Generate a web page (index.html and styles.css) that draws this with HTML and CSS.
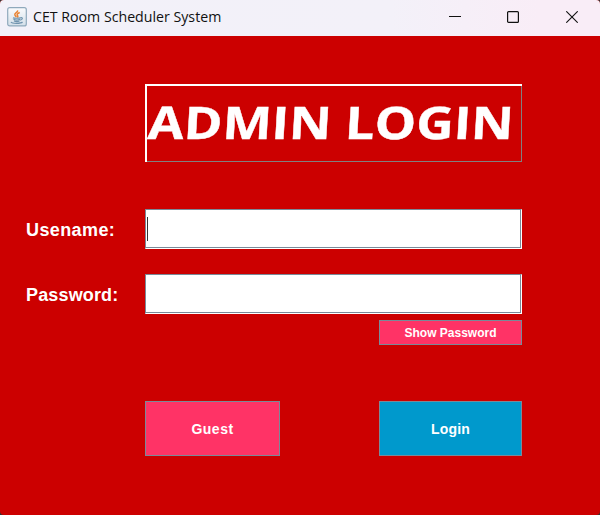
FILE: index.html
```
<!DOCTYPE html>
<html lang="en">
<head>
<meta charset="utf-8">
<title>CET Room Scheduler System</title>
<link rel="stylesheet" href="styles.css">
</head>
<body>
<div class="window">
  <header class="titlebar">
    <svg class="app-icon" width="20" height="20" viewBox="0 0 20 20" fill="none">
      <defs><linearGradient id="tile" x2="0" y2="1"><stop stop-color="#fafbfd"/><stop offset="1" stop-color="#d3dfe9"/></linearGradient></defs>
      <rect x=".7" y=".7" width="18.6" height="18.2" rx="2" fill="url(#tile)" stroke="#8fa9bc" stroke-width="1.2"/>
      <path d="M10.500 3.300c1 2-3.200 2.500-2.700 4.400.2 1 1.200 1.500 1.400 2.500M12.700 5.500c-3 1.300-3 2.200-2 3.300.4.600.2 1.200-.4 1.700" stroke="#e98232" stroke-width="1.500"/>
      <path d="M6 10.700c1 .7 6 .7 7.500 0M6.500 12.400c1.500.7 5 .7 6.500 0M7 14c1.500.6 4 .6 5.500 0M13.500 10.800c2.500-.6 2.500 1.600-.3 2.400M4 15c1 1.700 10 1.700 11.500 0" stroke="#6f93ae" stroke-width="1.200"/>
    </svg>
    <span class="caption">CET Room Scheduler System</span>
    <div class="controls">
      <svg width="12" height="12"><path d="M0 5.500h12" stroke="#111"/></svg>
      <svg width="12" height="12"><rect x=".6" y=".6" width="10.800" height="10.800" rx="1" fill="none" stroke="#111" stroke-width="1.200"/></svg>
      <svg width="12" height="12"><path d="M.3.3l11.400 11.400M11.700.3L.3 11.700" stroke="#111" stroke-width="1.100"/></svg>
    </div>
  </header>
  <main class="login">
    <h1 class="heading"><span class="heading-text">ADMIN LOGIN</span></h1>
    <label class="label user-label" for="user">Usename:</label>
    <div class="field user-field"><span class="caret"></span><input id="user" type="text"></div>
    <label class="label pass-label" for="pass">Password:</label>
    <div class="field pass-field"><input id="pass" type="password"></div>
    <button class="button show">Show Password</button>
    <div class="actions">
      <button class="button guest">Guest</button>
      <button class="button submit">Login</button>
    </div>
  </main>
</div>
</body>
</html>
```
FILE: styles.css
```
* { box-sizing: border-box; }
body { margin: 0; background: #333; }
.window {
  width: 600px;
  height: 515px;
  background: #c00;
  border-radius: 4px;
  overflow: hidden;
}
.titlebar {
  display: flex;
  align-items: center;
  height: 36px;
  padding: 0 22px 0 7px;
  background: linear-gradient(90deg, #f2f1f9 0, #f3f1f9 65%, #f9edf7 90%);
}
.app-icon { margin-top: -2px; }
.caption {
  margin: -4px 0 0 6px;
  font: 15px/20px "Open Sans", sans-serif;
  color: #111;
  white-space: nowrap;
  transform: scaleX(.945);
  transform-origin: left;
}
.controls { display: flex; gap: 46px; margin: -2px 0 0 auto; }
.controls svg { display: block; }
.controls svg:nth-child(-n+2) { position: relative; left: -1px; }
.login {
  display: grid;
  grid-template-columns: 119px 377px;
  grid-template-rows: 78px 47px 40px 25px 40px 6px 25px 56px 55px;
  padding: 48px 0 0 26px;
  font-family: "Liberation Sans", Arial, sans-serif;
}
.heading {
  grid-area: 1 / 2;
  margin: 0;
  border: solid #fff;
  border-width: 2px 0 0 2px;
  box-shadow: inset -1px -1px #808080;
  font: 700 45px/72px "Open Sans", sans-serif;
  color: #fff;
  white-space: nowrap;
}
.heading-text {
  display: inline-block;
  -webkit-text-stroke: .4px #fff;
  transform-origin: 0 53px;
  transform: scaleX(1.16) skewX(-3deg);
}
.label {
  align-self: center;
  padding-top: 2px;
  font-size: 18px;
  line-height: 20px;
  font-weight: 700;
  letter-spacing: .4px;
  color: #fff;
}
.user-label { grid-area: 3 / 1; }
.pass-label { grid-area: 5 / 1; letter-spacing: .15px; }
.field {
  display: flex;
  align-items: center;
  background: #fff;
  border: 1px solid;
  border-color: #7a8a99 #fff #fff #7a8a99;
  box-shadow: inset -1px -1px #7a8a99, inset 1px 1px #fff;
}
.user-field { grid-area: 3 / 2; }
.pass-field { grid-area: 5 / 2; }
.field input {
  flex: 1;
  height: 30px;
  padding: 0;
  border: 0;
  outline: 0;
  background: transparent;
  font: 18px "Liberation Sans", sans-serif;
}
.caret { width: 1px; height: 24px; margin-left: 1px; background: #333; }
.button {
  padding: 0;
  border: 1px solid #7a8a99;
  background: #f36;
  color: #fff;
  font: 700 12px "Liberation Sans", Arial, sans-serif;
}
.show { grid-area: 7 / 2; justify-self: end; width: 143px; }
.actions { grid-area: 9 / 2; display: flex; justify-content: space-between; }
.guest { width: 135px; font-size: 14px; letter-spacing: .5px; }
.submit { width: 143px; font-size: 14px; letter-spacing: .2px; background: #09c; }
```
